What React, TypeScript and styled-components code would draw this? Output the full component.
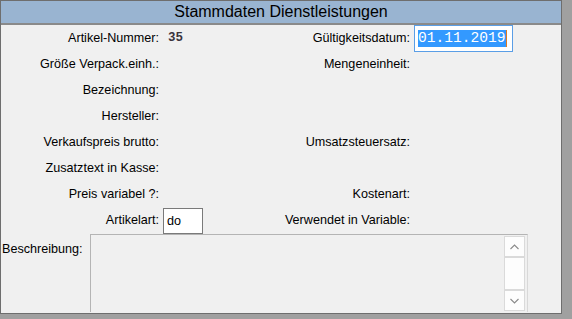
import styled, { createGlobalStyle } from "styled-components";

const GlobalStyle = createGlobalStyle`
    html, body {
        margin: 0;
        padding: 0;
        background: #a0a0a0;
    }
    body {
        width: 572px;
        height: 319px;
        overflow: hidden;
        font-family: "Liberation Sans", Arial, sans-serif;
    }
`

const Window = styled.div`
    width: 562px;
    height: 314px;
    box-sizing: border-box;
    border: 1px solid #6e6e6e;
    background: #f0f0f0;
    display: flex;
    flex-direction: column;
`

const TitleBar = styled.div`
    height: 22px;
    background: #99b4d1;
    border-bottom: 2px solid #8a8a8a;
    color: #000;
    font-size: 16px;
    line-height: 22px;
    text-align: center;
`

const FormGrid = styled.div`
    display: grid;
    grid-template-columns: 158px 91px 160px 1fr;
    grid-auto-rows: 26px;
`

const Label = styled.div`
    display: flex;
    align-items: center;
    justify-content: flex-end;
    font-size: 12.6px;
    color: #000;
    white-space: nowrap;
`

const Value = styled.div<{ $pad?: number }>`
    display: flex;
    align-items: center;
    padding-left: ${p => p.$pad ?? 4}px;
`

const NumberText = styled.span`
    font-family: "Liberation Mono", "Courier New", monospace;
    font-size: 12.5px;
    font-weight: bold;
    color: #3a343c;
`

const DateInput = styled.div`
    width: 99px;
    height: 27px;
    box-sizing: border-box;
    border: 1px solid #5a9ee6;
    background: #fff;
    display: flex;
    align-items: center;
    padding-left: 3px;
`

const Selected = styled.span`
    font-family: "Liberation Mono", "Courier New", monospace;
    font-size: 14.6px;
    line-height: 17px;
    background: #3399ff;
    color: #fff;
    border-right: 1px solid #e07a20;
`

const SmallInput = styled.div`
    width: 40px;
    height: 26px;
    margin-top: 1px;
    box-sizing: border-box;
    border: 1px solid #7a7a7a;
    background: #fff;
    font-size: 12.6px;
    display: flex;
    align-items: center;
    padding-left: 3px;
`

const DescRow = styled.div`
    display: flex;
    margin-top: 1px;
`

const DescLabel = styled.div`
    width: 88px;
    padding: 7px 0 0 1px;
    font-size: 12.6px;
    line-height: 16px;
`

const TextArea = styled.div`
    width: 438px;
    height: 78px;
    box-sizing: border-box;
    border: 1px solid #b4b4b4;
    border-right-color: #d8d8d8;
    border-bottom: none;
    display: flex;
    justify-content: flex-end;
    padding: 1px 2px 1px 0;
`

const ScrollBar = styled.div`
    width: 21px;
    background: #fdfdfd;
    display: flex;
    flex-direction: column;
`

const ScrollPart = styled.div<{ $h: number }>`
    height: ${p => p.$h}px;
    box-sizing: border-box;
    border: 1px solid #dadada;
    display: flex;
    align-items: center;
    justify-content: center;
`

function Chevron({ up }: { up?: boolean }) {
    return (
        <svg width="9" height="6" viewBox="0 0 9 6">
            <path
                d={up ? "M0.5 5 L4.5 1 L8.5 5" : "M0.5 1 L4.5 5 L8.5 1"}
                fill="none"
                stroke="#8a8a8a"
                strokeWidth="1.1"
            />
        </svg>
    )
}

export default function App() {
    return (
        <>
            <GlobalStyle />
            <Window>
                <TitleBar>Stammdaten Dienstleistungen</TitleBar>
                <FormGrid>
                    <Label>Artikel-Nummer:</Label>
                    <Value $pad={9}><NumberText>35</NumberText></Value>
                    <Label>Gültigkeitsdatum:</Label>
                    <Value>
                        <DateInput><Selected>01.11.2019</Selected></DateInput>
                    </Value>

                    <Label>Größe Verpack.einh.:</Label>
                    <Value />
                    <Label>Mengeneinheit:</Label>
                    <Value />

                    <Label>Bezeichnung:</Label>
                    <Value />
                    <Label />
                    <Value />

                    <Label>Hersteller:</Label>
                    <Value />
                    <Label />
                    <Value />

                    <Label>Verkaufspreis brutto:</Label>
                    <Value />
                    <Label>Umsatzsteuersatz:</Label>
                    <Value />

                    <Label>Zusatztext in Kasse:</Label>
                    <Value />
                    <Label />
                    <Value />

                    <Label>Preis variabel ?:</Label>
                    <Value />
                    <Label>Kostenart:</Label>
                    <Value />

                    <Label>Artikelart:</Label>
                    <Value>
                        <SmallInput>do</SmallInput>
                    </Value>
                    <Label>Verwendet in Variable:</Label>
                    <Value />
                </FormGrid>
                <DescRow>
                    <DescLabel>Beschreibung:</DescLabel>
                    <TextArea>
                        <ScrollBar>
                            <ScrollPart $h={21}><Chevron up /></ScrollPart>
                            <ScrollPart $h={33} />
                            <ScrollPart $h={21}><Chevron /></ScrollPart>
                        </ScrollBar>
                    </TextArea>
                </DescRow>
            </Window>
        </>
    )
}
